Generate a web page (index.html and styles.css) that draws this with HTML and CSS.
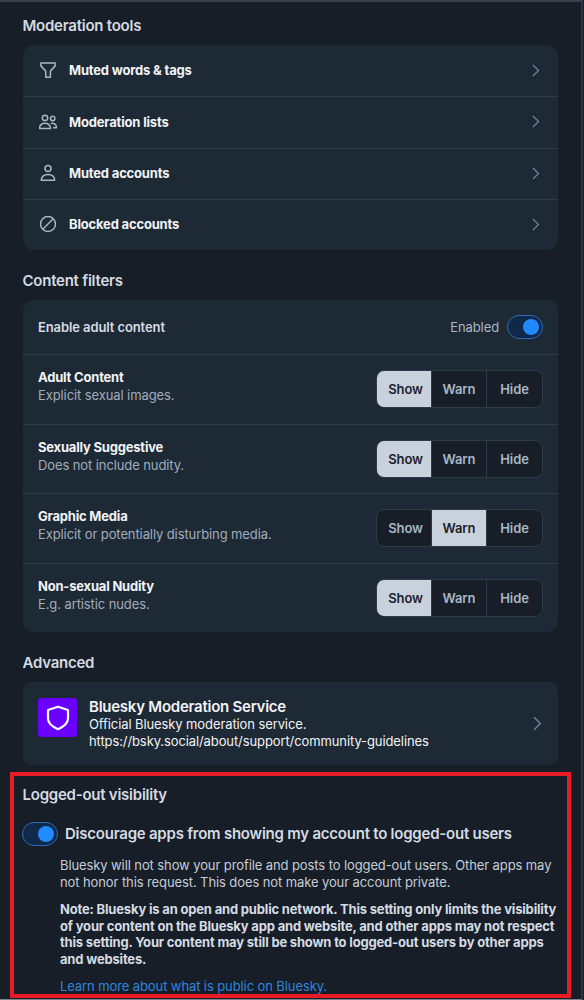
FILE: index.html
```
<!DOCTYPE html>
<html lang="en">
<head>
    <meta charset="utf-8">
    <title>Moderation</title>
    <link rel="stylesheet" href="styles.css">
</head>
<body>
    <div class="page">
        <h2 class="heading">Moderation tools</h2>
        <div class="card tools">
            <a class="tool">
                <svg class="icon" viewBox="0 0 24 24"><path d="M2.500 2.500h19v4l-6.300 7V21.500H9V13.500l-6.500-7z"/></svg>
                <span>Muted words &amp; tags</span>
                <svg class="chevron" viewBox="0 0 8 13"><path d="M1 1l5.500 5.500L1 12"/></svg>
            </a>
            <a class="tool">
                <svg class="icon" viewBox="0 0 24 24"><circle cx="8" cy="6.500" r="3.600"/><circle cx="18.300" cy="7.300" r="2.900"/><path d="M.5 20.500c.6-4.400 3.600-7 7.500-7s6.900 2.600 7.500 7zM15.800 14c4-1.600 7 1.300 7.800 5.700h-4.800"/></svg>
                <span>Moderation lists</span>
                <svg class="chevron" viewBox="0 0 8 13"><path d="M1 1l5.500 5.500L1 12"/></svg>
            </a>
            <a class="tool">
                <svg class="icon" viewBox="0 0 24 24"><circle cx="12" cy="6" r="4"/><path d="M3 21.500c.5-4.700 4.300-7.500 9-7.500s8.500 2.800 9 7.500z"/></svg>
                <span>Muted accounts</span>
                <svg class="chevron" viewBox="0 0 8 13"><path d="M1 1l5.500 5.500L1 12"/></svg>
            </a>
            <a class="tool">
                <svg class="icon" viewBox="0 0 24 24"><circle cx="12" cy="12" r="10"/><path d="M5 19L19 5"/></svg>
                <span>Blocked accounts</span>
                <svg class="chevron" viewBox="0 0 8 13"><path d="M1 1l5.500 5.500L1 12"/></svg>
            </a>
        </div>

        <h2 class="heading">Content filters</h2>
        <div class="card filters">
            <div class="enable">
                <span class="enable-label">Enable adult content</span>
                <span class="enable-state">Enabled</span>
                <span class="toggle"></span>
            </div>
            <div class="filter">
                <div class="filter-text">
                    <div class="filter-name">Adult Content</div>
                    <div class="filter-desc">Explicit sexual images.</div>
                </div>
                <div class="options"><span class="option selected">Show</span><span class="option">Warn</span><span class="option">Hide</span></div>
            </div>
            <div class="filter">
                <div class="filter-text">
                    <div class="filter-name">Sexually Suggestive</div>
                    <div class="filter-desc">Does not include nudity.</div>
                </div>
                <div class="options"><span class="option selected">Show</span><span class="option">Warn</span><span class="option">Hide</span></div>
            </div>
            <div class="filter">
                <div class="filter-text">
                    <div class="filter-name">Graphic Media</div>
                    <div class="filter-desc">Explicit or potentially disturbing media.</div>
                </div>
                <div class="options"><span class="option">Show</span><span class="option selected">Warn</span><span class="option">Hide</span></div>
            </div>
            <div class="filter">
                <div class="filter-text">
                    <div class="filter-name">Non-sexual Nudity</div>
                    <div class="filter-desc">E.g. artistic nudes.</div>
                </div>
                <div class="options"><span class="option selected">Show</span><span class="option">Warn</span><span class="option">Hide</span></div>
            </div>
        </div>

        <h2 class="heading">Advanced</h2>
        <div class="card service">
            <div class="avatar">
                <svg viewBox="0 0 24 26"><path d="M12 1.800L22 5v8.500c0 5-4 8-10 10.700C6 21.500 2 18.500 2 13.500V5z"/></svg>
            </div>
            <div class="service-text">
                <div class="service-name">Bluesky Moderation Service</div>
                <div class="service-desc">Official Bluesky moderation service.<br>https://bsky.social/about/support/community-guidelines</div>
            </div>
            <svg class="chevron large" viewBox="0 0 8 13"><path d="M1 1l5.500 5.500L1 12"/></svg>
        </div>

        <div class="visibility">
            <h2 class="heading">Logged-out visibility</h2>
            <div class="discourage">
                <span class="toggle"></span>
                <span class="discourage-label">Discourage apps from showing my account to logged-out users</span>
            </div>
            <div class="details">
                <p>Bluesky will not show your profile and posts to logged-out users. Other apps may<br>not honor this request. This does not make your account private.</p>
                <p class="note">Note: Bluesky is an open and public network. This setting only limits the visibility<br>of your content on the Bluesky app and website, and other apps may not respect<br>this setting. Your content may still be shown to logged-out users by other apps<br>and websites.</p>
                <a class="link">Learn more about what is public on Bluesky.</a>
            </div>
        </div>
    </div>
</body>
</html>
```
FILE: styles.css
```
* { box-sizing: border-box; }
body { margin: 0; background: #171e27; color: #f1f3f5; font-family: Inter, sans-serif; font-size: 13px; letter-spacing: -0.1px; }
svg { fill: none; flex: none; }
.page { width: 583px; height: 1000px; padding: 0 24px 0 23px; border-top: 2px solid #39404d; border-right: 2px solid #29323f; border-bottom: 1px solid #7d8288; overflow: hidden; white-space: nowrap; }
.heading { margin: 0 0 0 -0.5px; height: 50px; padding-top: 21px; font-size: 15px; line-height: 20px; font-weight: 600; letter-spacing: -0.24px; color: #d5dbe2; }
.card { width: 535px; background: #1e2936; border-radius: 11px; }

.tools { height: 205px; display: grid; grid-template-rows: repeat(4, 1fr); }
.heading:first-child { height: 43px; padding-top: 14px; }
.tool { display: flex; align-items: center; padding: 0 18px 1px 16px; font-weight: 700; letter-spacing: -0.18px; }
.tool + .tool { border-top: 1px solid #2d3a48; }
.tool span { flex: 1; }
.icon { width: 18px; height: 18px; margin-right: 12px; stroke: #a9b6c5; stroke-width: 2; stroke-linejoin: round; }
.chevron { width: 8px; height: 13px; stroke: #6f8299; stroke-width: 1.3; }

.filters { height: 332px; }
.enable { display: flex; align-items: center; height: 54px; padding: 0 15px; }
.enable-label { flex: 1; font-weight: 600; color: #d5dbe2; }
.enable-state { margin-right: 8px; color: #a9b6c5; }
.toggle { display: flex; justify-content: flex-end; align-items: center; width: 36px; height: 24px; padding-right: 3px; border: 1px solid #2a6cb5; border-radius: 12px; background: #10294a; flex: none; }
.toggle::after { content: ""; width: 16px; height: 16px; border-radius: 50%; background: #208bfe; }
.filter { display: flex; justify-content: space-between; height: 69.5px; padding: 13px 15px 0; border-top: 1px solid #2d3a48; }
.filter-name { font-weight: 700; line-height: 18px; letter-spacing: -0.2px; }
.filter-desc { line-height: 18px; color: #a0adbc; }
.options { display: grid; grid-template-columns: 54px 55px 56px; width: 167px; height: 38px; margin-top: 2px; border: 1px solid #2d3a48; border-radius: 8px; background: #171e27; overflow: hidden; }
.option { padding-left: 3px; line-height: 36px; text-align: center; font-weight: 600; color: #a9b6c5; }
.option + .option { padding-left: 0; border-left: 1px solid #2d3a48; }
.option.selected { background: #c9d1dc; color: #1a222d; }

.service { display: flex; height: 83px; padding: 16px 16px 0 15px; border-radius: 8px; }
.avatar { display: flex; align-items: center; justify-content: center; width: 39px; height: 39px; margin-right: 12px; border-radius: 3px; background: #6a00ff; }
.avatar svg { width: 24px; height: 26px; stroke: #fff; stroke-width: 2.200; stroke-linejoin: round; }
.service-text { flex: 1; }
.service-name { font-size: 15px; line-height: 17px; font-weight: 600; letter-spacing: -0.25px; }
.service-desc { padding-top: 1px; line-height: 16.500px; }
.chevron.large { width: 9px; height: 15px; margin-top: 18px; }

/* highlighted area */
.visibility { width: 561px; height: 226px; margin: 7px 0 0 -13px; padding-left: 9px; border: 4px solid #e81c27; }
.visibility .heading:first-child { height: 46px; padding-top: 9px; }
.discourage { display: flex; align-items: center; height: 24px; margin-left: -1px; }
.discourage-label { margin-left: 7px; padding-bottom: 1px; font-size: 15px; font-weight: 600; letter-spacing: -0.23px; color: #d5dbe2; }
.details { padding-left: 37px; color: #c5cdd7; line-height: 16.500px; }
.details p { margin: 11px 0; }
.details .note { font-weight: 700; letter-spacing: -0.18px; color: #d5dbe2; }
.link { color: #2f85dd; }
```
